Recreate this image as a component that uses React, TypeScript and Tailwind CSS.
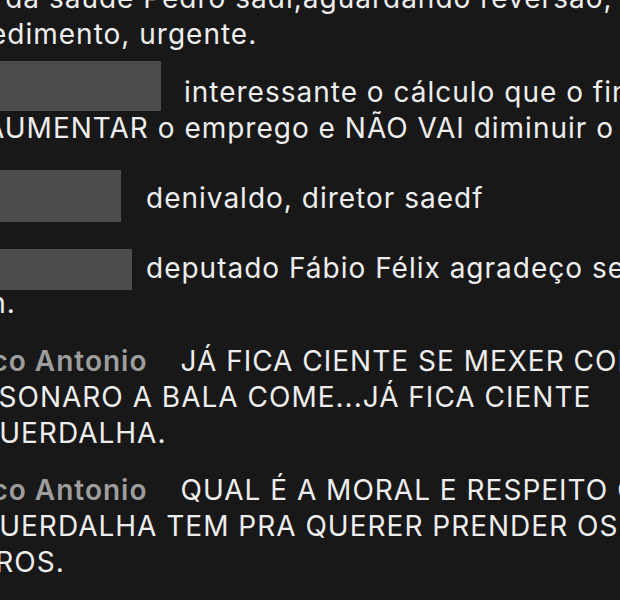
import type { ReactNode } from "react";

type LineProps = {
  children: ReactNode;
  className?: string;
};

function Line({ children, className = "" }: LineProps) {
  return <div className={`whitespace-nowrap ${className}`}>{children}</div>;
}

// bloco cinza que cobre o nome do usuário
function Redacted({ w, h }: { w: string; h: string }) {
  return <span className={`block shrink-0 bg-[#4c4c4c] ${w} ${h}`} />;
}

function Author({ name }: { name: string }) {
  return <span className="font-semibold text-[#9d9d9d]">{name}</span>;
}

export default function App() {
  return (
    <div
      className="h-[600px] w-[620px] overflow-hidden bg-[#181818] text-[28px] leading-[36px] tracking-[1px] text-[#eeeeee]"
      style={{ fontFamily: "Inter, 'Noto Sans', sans-serif" }}
    >
      <div className="ml-[-60px] mt-[-20px] flex flex-col">
        {/* comentário anterior, cortado no topo */}
        <div>
          <Line>Sra. da saude Pedro sadi,aguardando reversão, para o</Line>
          <Line className="-ml-[14px]">procedimento, urgente.</Line>
        </div>

        <div className="mt-[9px]">
          <div className="flex items-start">
            <Redacted w="w-[221px]" h="h-[50px]" />
            <Line className="ml-[23px] mt-[13px]">
              interessante o cálculo que o financiamento
            </Line>
          </div>
          <Line className="-ml-[5px] -mt-px">
            vai AUMENTAR o emprego e NÃO VAI diminuir o déficit
          </Line>
        </div>

        <div className="mt-[24px] flex items-start">
          <Redacted w="w-[181px]" h="h-[52px]" />
          <Line className="ml-[25px] mt-[10px]">denivaldo, diretor saedf</Line>
        </div>

        <div className="mt-[27px]">
          <div className="flex h-[36px] items-start">
            <Redacted w="w-[192px]" h="h-[41px]" />
            <Line className="ml-[14px] mt-px">
              deputado Fábio Félix agradeço sempre a atenção
            </Line>
          </div>
          <Line className="-ml-[14px]">Amen.</Line>
        </div>

        <div className="mt-[22px]">
          <Line className="-ml-[4px]">
            <Author name="Marco Antonio" />
            <span className="ml-[33px]">JÁ FICA CIENTE SE MEXER COM O</span>
          </Line>
          <Line>BOLSONARO A BALA COME...JÁ FICA CIENTE</Line>
          <Line>ESQUERDALHA.</Line>
        </div>

        <div className="mt-[21px]">
          <Line className="-ml-[4px]">
            <Author name="Marco Antonio" />
            <span className="ml-[33px]">QUAL É A MORAL E RESPEITO QUE A</span>
          </Line>
          <Line>ESQUERDALHA TEM PRA QUERER PRENDER OS</Line>
          <Line className="-ml-[8px]">OUTROS.</Line>
        </div>
      </div>
    </div>
  );
}
